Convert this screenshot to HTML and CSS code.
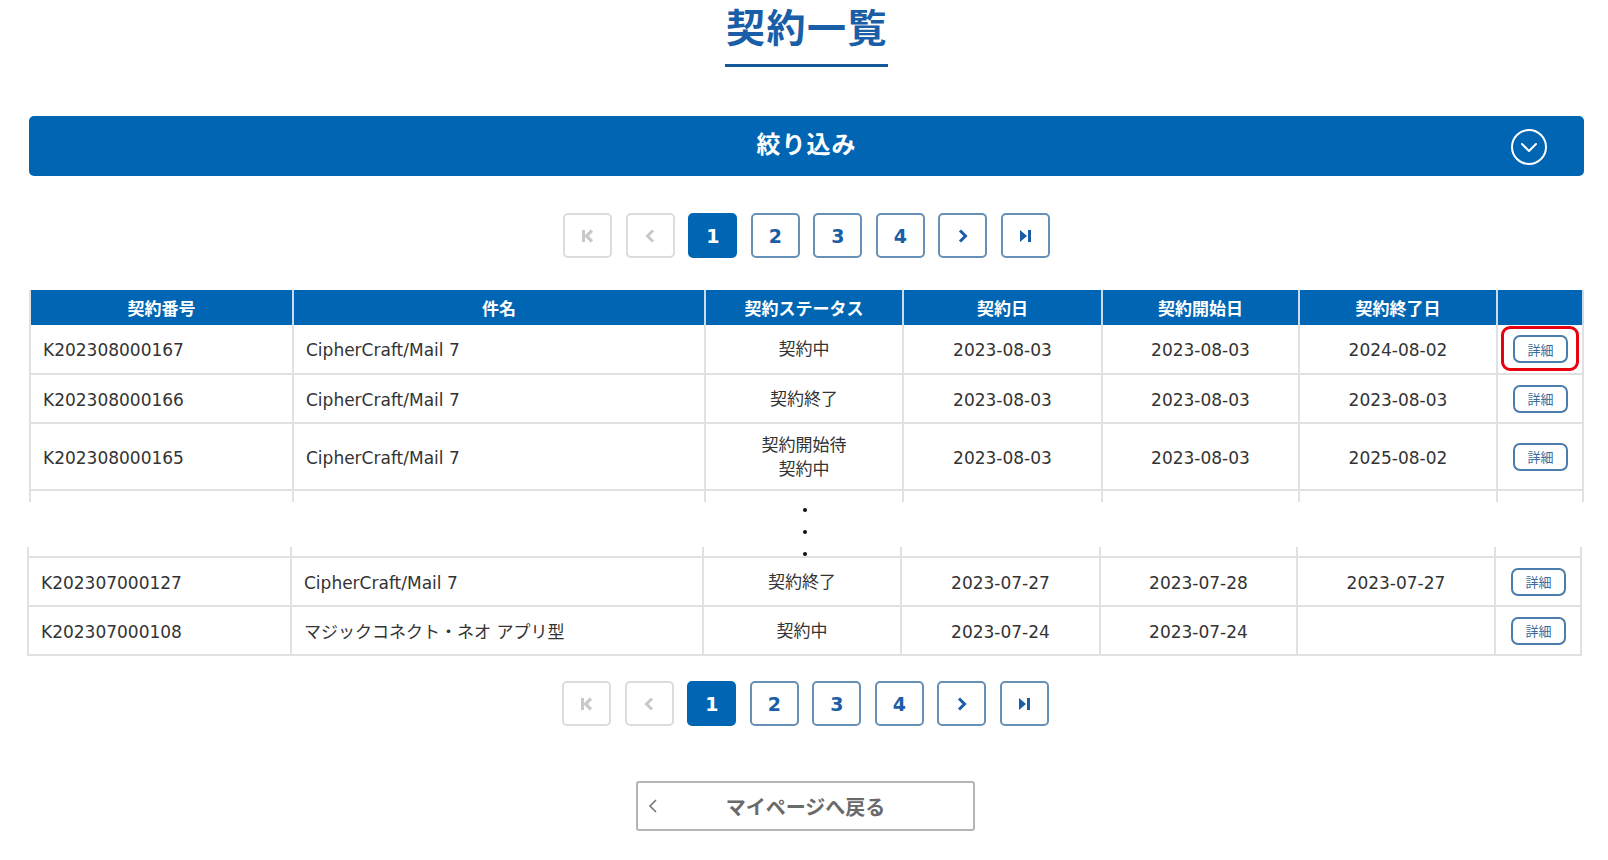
FILE: index.html
```html
<!DOCTYPE html>
<html lang="ja">
<head>
<meta charset="utf-8">
<title>契約一覧</title>
<link rel="stylesheet" href="styles.css">
</head>
<body>
<div class="page">
  <header class="title-wrap">
    <h1 class="title">契約一覧</h1>
  </header>

  <div class="filter-bar">
    <span class="filter-label">絞り込み</span>
    <svg class="filter-icon" width="38" height="38" viewBox="0 0 38 38" aria-hidden="true">
      <circle cx="19" cy="19" r="17" fill="none" stroke="#fff" stroke-width="2"/>
      <polyline points="12,16 19,23 26,16" fill="none" stroke="#fff" stroke-width="2" stroke-linecap="round" stroke-linejoin="round"/>
    </svg>
  </div>

  <nav class="pager pager-top">
    <span class="pg pg-disabled"><svg width="14" height="14" viewBox="0 0 14 14"><rect x="1" y="1" width="3" height="12" fill="currentColor"/><polyline points="11,1.5 5.5,7 11,12.5" fill="none" stroke="currentColor" stroke-width="3.2"/></svg></span>
    <span class="pg pg-disabled"><svg width="12" height="14" viewBox="0 0 12 14"><polyline points="9,1.5 3.5,7 9,12.5" fill="none" stroke="currentColor" stroke-width="3"/></svg></span>
    <span class="pg pg-active">1</span>
    <a class="pg" href="#">2</a>
    <a class="pg" href="#">3</a>
    <a class="pg" href="#">4</a>
    <a class="pg" href="#"><svg width="12" height="14" viewBox="0 0 12 14"><polyline points="3,1.5 8.5,7 3,12.5" fill="none" stroke="currentColor" stroke-width="3"/></svg></a>
    <a class="pg" href="#"><svg width="14" height="14" viewBox="0 0 14 14"><polygon points="2,1 9,7 2,13" fill="currentColor"/><rect x="10" y="1" width="3" height="12" fill="currentColor"/></svg></a>
  </nav>

  <table class="list">
    <thead>
      <tr class="head-row">
        <th class="c1">契約番号</th>
        <th class="c2">件名</th>
        <th class="c3">契約ステータス</th>
        <th class="c4">契約日</th>
        <th class="c5">契約開始日</th>
        <th class="c6">契約終了日</th>
        <th class="c7"></th>
      </tr>
    </thead>
    <tbody>
      <tr class="row-a">
        <td class="left">K202308000167</td>
        <td class="left">CipherCraft/Mail 7</td>
        <td class="jp">契約中</td>
        <td>2023-08-03</td>
        <td>2023-08-03</td>
        <td>2024-08-02</td>
        <td class="act"><span class="mark"><a class="detail" href="#">詳細</a><span class="highlight"></span></span></td>
      </tr>
      <tr class="row-b">
        <td class="left">K202308000166</td>
        <td class="left">CipherCraft/Mail 7</td>
        <td class="jp">契約終了</td>
        <td>2023-08-03</td>
        <td>2023-08-03</td>
        <td>2023-08-03</td>
        <td class="act"><a class="detail" href="#">詳細</a></td>
      </tr>
      <tr class="row-c">
        <td class="left">K202308000165</td>
        <td class="left">CipherCraft/Mail 7</td>
        <td class="jp">契約開始待<br>契約中</td>
        <td>2023-08-03</td>
        <td>2023-08-03</td>
        <td>2025-08-02</td>
        <td class="act"><a class="detail" href="#">詳細</a></td>
      </tr>
      <tr class="cut-bottom">
        <td></td><td></td><td></td><td></td><td></td><td></td><td></td>
      </tr>
    </tbody>
  </table>

  <div class="ellipsis" aria-hidden="true">
    <span class="dot"></span>
    <span class="dot"></span>
    <span class="dot"></span>
  </div>

  <div class="lower">
    <table class="list list-lower">
      <colgroup>
        <col class="c1"><col class="c2"><col class="c3"><col class="c4"><col class="c5"><col class="c6"><col class="c7">
      </colgroup>
      <tbody>
        <tr class="cut-top">
          <td class="c1"></td><td class="c2"></td><td class="c3"></td><td class="c4"></td><td class="c5"></td><td class="c6"></td><td class="c7"></td>
        </tr>
        <tr class="row-b">
          <td class="left">K202307000127</td>
          <td class="left">CipherCraft/Mail 7</td>
          <td class="jp">契約終了</td>
          <td>2023-07-27</td>
          <td>2023-07-28</td>
          <td>2023-07-27</td>
          <td class="act"><a class="detail" href="#">詳細</a></td>
        </tr>
        <tr class="row-b">
          <td class="left">K202307000108</td>
          <td class="left">マジックコネクト・ネオ アプリ型</td>
          <td class="jp">契約中</td>
          <td>2023-07-24</td>
          <td>2023-07-24</td>
          <td></td>
          <td class="act"><a class="detail" href="#">詳細</a></td>
        </tr>
      </tbody>
    </table>

    <nav class="pager pager-bottom">
      <span class="pg pg-disabled"><svg width="14" height="14" viewBox="0 0 14 14"><rect x="1" y="1" width="3" height="12" fill="currentColor"/><polyline points="11,1.5 5.5,7 11,12.5" fill="none" stroke="currentColor" stroke-width="3.2"/></svg></span>
      <span class="pg pg-disabled"><svg width="12" height="14" viewBox="0 0 12 14"><polyline points="9,1.5 3.5,7 9,12.5" fill="none" stroke="currentColor" stroke-width="3"/></svg></span>
      <span class="pg pg-active">1</span>
      <a class="pg" href="#">2</a>
      <a class="pg" href="#">3</a>
      <a class="pg" href="#">4</a>
      <a class="pg" href="#"><svg width="12" height="14" viewBox="0 0 12 14"><polyline points="3,1.5 8.5,7 3,12.5" fill="none" stroke="currentColor" stroke-width="3"/></svg></a>
      <a class="pg" href="#"><svg width="14" height="14" viewBox="0 0 14 14"><polygon points="2,1 9,7 2,13" fill="currentColor"/><rect x="10" y="1" width="3" height="12" fill="currentColor"/></svg></a>
    </nav>

    <div class="back-wrap">
      <a class="back" href="#">
        <svg class="back-chev" width="10" height="16" viewBox="0 0 10 16"><polyline points="8,2 2,8 8,14" fill="none" stroke="#777" stroke-width="1.6"/></svg>
        <span class="back-label">マイページへ戻る</span>
        <span></span>
      </a>
    </div>
  </div>
</div>
</body>
</html>
```

FILE: styles.css
```css
* { box-sizing: border-box; }

html, body {
  margin: 0;
  padding: 0;
  background: #fff;
}

body {
  font-family: "DejaVu Sans", "Noto Sans CJK JP", sans-serif;
  color: #333;
}

.page {
  width: 1555px;
  margin-left: 29px;
}

/* Title */
.title-wrap {
  display: flex;
  justify-content: center;
  padding-top: 2px;
}

.title {
  margin: 0;
  font-family: "Noto Sans CJK JP", sans-serif;
  font-weight: 700;
  font-size: 39px;
  line-height: 46px;
  letter-spacing: 1.5px;
  color: #1a5ea8;
  padding: 0 0 16px 1px;
  border-bottom: 3px solid #135899;
}

/* Filter bar */
.filter-bar {
  margin-top: 49px;
  height: 60px;
  background: #0066b4;
  border-radius: 5px;
  display: grid;
  grid-template-columns: 1fr auto 1fr;
  align-items: center;
}

.filter-label {
  grid-column: 2;
  font-family: "Noto Sans CJK JP", sans-serif;
  font-weight: 700;
  font-size: 24px;
  line-height: 32px;
  letter-spacing: 1px;
  color: #fff;
  margin-bottom: 7px;
}

.filter-icon {
  grid-column: 3;
  justify-self: end;
  margin-right: 36px;
  margin-top: 2px;
}

/* Pager */
.pager {
  display: flex;
  justify-content: center;
  gap: 13.5px;
}

.pager-top {
  margin-top: 37px;
}

.pager-bottom {
  margin-top: 25px;
}

.pg {
  width: 49px;
  height: 45px;
  display: flex;
  align-items: center;
  justify-content: center;
  border: 2px solid #6690b5;
  border-radius: 5px;
  color: #1b5ea5;
  text-decoration: none;
  font-family: "DejaVu Sans", sans-serif;
  font-weight: 700;
  font-size: 19px;
}

.pg-disabled {
  border-color: #dcdcdc;
  color: #c9c9c9;
}

.pg-active {
  background: #0066b4;
  border-color: #0066b4;
  color: #fff;
}

/* Table */
.list {
  margin-top: 32px;
  width: 1555px;
  table-layout: fixed;
  border-collapse: separate;
  border-spacing: 0;
  font-size: 17px;
}

.list th,
.list td {
  border-right: 2px solid #e1e1e1;
  padding: 0 12px;
  text-align: center;
  vertical-align: middle;
  line-height: 24px;
  white-space: nowrap;
}

.list th:first-child,
.list td:first-child {
  border-left: 2px solid #e1e1e1;
}

.list td {
  border-bottom: 2px solid #e1e1e1;
  color: #333;
  padding-top: 2px;
}

.list td.jp {
  padding-top: 0;
}

.list td.act {
  padding: 0;
}

.list th {
  background: #0066b4;
  color: #fff;
  font-family: "Noto Sans CJK JP", sans-serif;
  font-weight: 700;
  font-size: 17px;
  border-right-color: #c9dcee;
  border-left-color: #c9dcee;
}

.list td.left {
  text-align: left;
  padding-left: 12px;
}

.c1 { width: 265px; }
.c2 { width: 412px; }
.c3 { width: 198px; }
.c4 { width: 199px; }
.c5 { width: 197px; }
.c6 { width: 198px; }
.c7 { width: 86px; }

.head-row { height: 35px; }
.row-a { height: 50px; }
.row-b { height: 49px; }
.row-c { height: 67px; }

.list tr.cut-bottom { height: 11px; }
.list tr.cut-bottom td { border-bottom: none; padding: 0; }

.list tr.cut-top { height: 11px; }
.list tr.cut-top td { padding: 0; }

.detail {
  display: inline-flex;
  align-items: center;
  justify-content: center;
  width: 55px;
  height: 28px;
  border: 2px solid #4a7dab;
  border-radius: 7px;
  color: #3a6a98;
  text-decoration: none;
  font-family: "Noto Sans CJK JP", sans-serif;
  font-size: 13px;
  line-height: 1;
  vertical-align: middle;
  margin-left: 1px;
}

.mark {
  position: relative;
  display: inline-block;
  vertical-align: middle;
  line-height: 0;
}

.highlight {
  position: absolute;
  left: -11px;
  right: -11px;
  top: -9px;
  bottom: -8px;
  border: 3px solid #e8000f;
  border-radius: 9px;
  pointer-events: none;
}

/* Ellipsis */
.ellipsis {
  height: 45px;
  padding-top: 6px;
  display: flex;
  flex-direction: column;
  align-items: center;
  gap: 18px;
  padding-right: 3px;
}

.dot {
  flex: none;
  width: 4px;
  height: 4px;
  border-radius: 50%;
  background: #111;
}

/* Lower composite section (shifted by 2px in the source screenshot) */
.lower {
  margin-left: -2px;
}

.list-lower {
  margin-top: 0;
}

/* Back button */
.back-wrap {
  display: flex;
  justify-content: center;
  margin-top: 55px;
}

.back {
  width: 339px;
  height: 50px;
  border: 2px solid #b5b5b5;
  border-radius: 3px;
  display: grid;
  grid-template-columns: 1fr auto 1fr;
  align-items: center;
  text-decoration: none;
  padding: 0 10px;
}

.back-chev {
  justify-self: start;
}

.back-label {
  font-family: "Noto Sans CJK JP", sans-serif;
  font-weight: 700;
  font-size: 20px;
  color: #6a6a6a;
}
```
